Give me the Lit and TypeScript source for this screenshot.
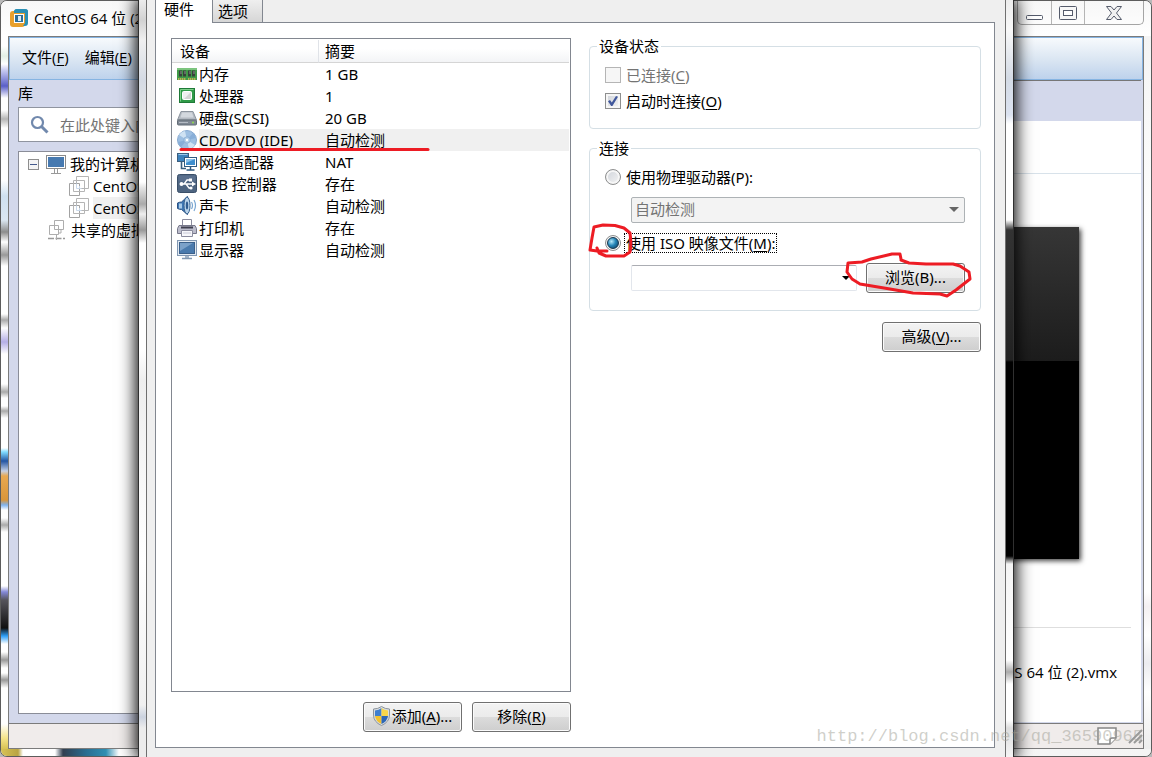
import { LitElement, html, css, svg, nothing } from "lit";
import { customElement, state } from "lit/decorators.js";
import { classMap } from "lit/directives/class-map.js";

type Device = { id: string; name: string; summary: string };

const devices: Device[] = [
  { id: "memory", name: "内存", summary: "1 GB" },
  { id: "cpu", name: "处理器", summary: "1" },
  { id: "disk", name: "硬盘(SCSI)", summary: "20 GB" },
  { id: "cd", name: "CD/DVD (IDE)", summary: "自动检测" },
  { id: "net", name: "网络适配器", summary: "NAT" },
  { id: "usb", name: "USB 控制器", summary: "存在" },
  { id: "sound", name: "声卡", summary: "自动检测" },
  { id: "printer", name: "打印机", summary: "存在" },
  { id: "display", name: "显示器", summary: "自动检测" },
];

const glyphs: Record<string, unknown> = {
  memory: svg`
    <rect x="0" y="4" width="20" height="12" fill="#3f9a47"/>
    <rect x="0" y="4" width="20" height="2" fill="#7cc47e"/>
    <path d="M2 6.500h3v6H2zM6 6.500h3v6H6zM11 6.500h3v6h-3zM15 6.500h3v6h-3z" fill="#37423b"/>
    <path d="M4 7v3M8 7v3M13 7v3M17 7v3" stroke="#8a938c"/>
    <path d="M1 15h8M11 15h8" stroke="#e6b65a" stroke-width="1.6" stroke-dasharray="1.4 .6"/>`,
  cpu: svg`
    <rect x="2.500" y="2.500" width="15" height="14" fill="#2f9a48" stroke="#1f7a38"/>
    <path d="M3.500 15.500V3.500H16.500" fill="none" stroke="#7fd08b"/>
    <rect x="5.500" y="5.500" width="9" height="8" rx="1" fill="#f0f0f0" stroke="#fff"/>
    <path d="M14 6v7H7z" fill="#d4d4d4"/>`,
  disk: svg`
    <path d="M4 3.500h12l3.500 8.500h-19z" fill="#b4bac2" stroke="#8d959f"/>
    <path d="M5 4.500h10l1.500 5h-13z" fill="#d3d8de"/>
    <rect x=".5" y="12" width="19" height="5" rx="1" fill="#7f8893" stroke="#636c77"/>
    <path d="M2 14.500h9" stroke="#b4bbc4"/>
    <circle cx="16" cy="14.500" r="1" fill="#8fe04a"/>`,
  cd: svg`
    <circle cx="10" cy="10" r="9.500" fill="#9dbfe2" stroke="#86a9d0"/>
    <path d="M10 10L2 5a9 9 0 0 1 6-4zM10 10l8 5a9 9 0 0 1-6 4z" fill="#cfe2f3"/>
    <path d="M10 10L1 12a9 9 0 0 0 3 5zM10 10l9-2a9 9 0 0 0-3-5z" fill="#88aed8"/>
    <circle cx="10" cy="10" r="3.200" fill="#b4d0ea" stroke="#7fa5cf" stroke-width=".7"/>
    <circle cx="10" cy="10" r="1.200" fill="#fff"/>`,
  net: svg`
    <rect x=".5" y="1.500" width="11" height="8" fill="#3c82bd" stroke="#3b5e7e"/>
    <path d="M1.500 2.500h9" stroke="#9cc8ea"/>
    <path d="M4.500 10v6.500H9" fill="none" stroke="#3b5e7e" stroke-width="1.600"/>
    <rect x="7.500" y="5.500" width="12" height="9" fill="#fff" stroke="#2f5a80"/>
    <rect x="9" y="7" width="9" height="6" fill="#3f8fce"/>
    <path d="M9 7h9l-9 4z" fill="#8cc2ea"/>
    <path d="M13.500 15v2.500M9.500 18h8" stroke="#2f5a80" stroke-width="1.500"/>`,
  usb: svg`
    <rect x=".5" y=".5" width="19" height="18" rx="2" fill="#4d6480" stroke="#3a4f69"/>
    <path d="M1.500 1.500h17v6h-17z" fill="#66799a" opacity=".5"/>
    <path d="M4 10h12M7 10l3-4h3M9 10l3 4h2" fill="none" stroke="#fff" stroke-width="1.300"/>
    <circle cx="4.500" cy="10" r="2" fill="#fff"/>
    <path d="M15 7.500l4 2.500-4 2.500z" fill="#fff"/>
    <rect x="12" y="4.500" width="3" height="3" fill="#fff"/>
    <circle cx="14" cy="14" r="1.600" fill="#fff"/>`,
  sound: svg`
    <path d="M.5 7q2-1 4-1L10.500.5v18L4.500 13.500q-2 0-4-1z" fill="#3f78b5" stroke="#2c5284"/>
    <path d="M2 7.500h3v5H2z" fill="#a9cbe8"/>
    <ellipse cx="10" cy="9.500" rx="3" ry="8.500" fill="#b9d3ea" stroke="#34608f"/>
    <ellipse cx="10" cy="9.500" rx="1.200" ry="4" fill="#2f5c90"/>
    <path d="M14.500 6q2 3.500 0 7M17 4q3 5.500 0 11" fill="none" stroke="#7ba7d2" stroke-width="1.200"/>`,
  printer: svg`
    <path d="M5.500 1.500h9v7h-9z" fill="#fff" stroke="#8b8c9e"/>
    <path d="M2 7.500h16l1.500 3v5H.5v-5z" fill="#bbbccb" stroke="#77788b"/>
    <path d="M4 9.500h12" stroke="#3f4050" stroke-width="2"/>
    <path d="M4.500 12.500h11v6h-11z" fill="#f7f7fb" stroke="#8b8c9e"/>
    <path d="M6 15h8" stroke="#c8c9d6"/>`,
  display: svg`
    <rect x=".5" y=".5" width="19" height="15" fill="#e1e9f2" stroke="#8298b3"/>
    <rect x="2.500" y="2.500" width="15" height="11" fill="#4a7aad" stroke="#3b608b"/>
    <path d="M3 3h13L3 11z" fill="#7ba1c9"/>
    <path d="M10 16v2" stroke="#a5b5c8" stroke-width="4"/>
    <path d="M5 18.500h10" stroke="#8298b3" stroke-width="1.500"/>`,
};

const shared = css`
  * {
    box-sizing: border-box;
  }
  button,
  input,
  select {
    font: inherit;
    color: inherit;
    margin: 0;
  }
  svg {
    display: block;
    flex: none;
  }
  u {
    text-underline-offset: 2px;
    text-decoration-thickness: 1px;
  }
`;

@customElement("vm-library-window")
export class VmLibraryWindow extends LitElement {
  static styles = [
    shared,
    css`
      :host {
        display: flex;
        flex-direction: column;
        box-sizing: border-box;
        height: 100%;
        border: 1px solid #5c5c5c;
        border-radius: 7px;
        overflow: hidden;
        font: 15px/22px "Open Sans", "Noto Sans CJK SC", sans-serif;
        background: #fcfcfc;
      }
      .titlebar {
        display: flex;
        align-items: center;
        height: 35px;
        padding: 0 7px 2px 9px;
        gap: 6px;
        background: linear-gradient(#f7f7f7, #fff);
      }
      .title {
        flex: 1;
        white-space: nowrap;
      }
      .controls {
        display: flex;
        align-self: flex-start;
        border: 1px solid #a5a5a5;
        border-top: 0;
        border-radius: 0 0 5px 5px;
      }
      .controls button {
        display: grid;
        place-items: center;
        width: 33px;
        height: 23px;
        padding: 0;
        border: 0;
        background: none;
      }
      .controls button + button {
        border-left: 1px solid #b5b5b5;
      }
      .controls .close {
        width: 59px;
      }
      .middle {
        flex: 1;
        display: grid;
        grid-template-columns: 7px minmax(0, 1fr) 7px;
        min-height: 0;
      }
      .edge-left {
        background: linear-gradient(
          #fff,
          #fff 10px,
          #e3f0e6 20px,
          #fff 28px,
          #c9ccf2 34px,
          #5a5fc8 50px,
          #fff 62px,
          #fff 74px,
          #b5b5b5 83px,
          #fff 92px,
          #fff 144px,
          #cfe0ef 160px,
          #dbe7f2 184px,
          #8c8c8c 196px,
          #fff 206px,
          #999 219px,
          #fff 230px,
          #fff 278px,
          #aaa 284px,
          #fff 292px,
          #b4aee6 306px,
          #fff 318px,
          #fff 348px,
          #aaa 356px,
          #fff 362px,
          #fff 370px,
          #aaa 375px,
          #fff 382px,
          #fff 412px,
          #7fdcff 416px,
          #2455a3 425px,
          #c4cfe4 435px,
          #e8a850 440px,
          #d9963a 464px,
          #7fb4f0 469px,
          #fff 474px,
          #fff 482px,
          #aaa 489px,
          #fff 496px,
          #fff 550px,
          #8388d8 556px,
          #55545c 564px,
          #111 592px,
          #2d9ff8 600px,
          #fff 608px,
          #fff 616px,
          #999 624px,
          #fff 632px,
          #fff 637px,
          #999 644px,
          #fff 652px,
          #fff 688px,
          #f5e48a 702px,
          #d7c254
        );
      }
      .edge-right {
        background: linear-gradient(#f4f4f4, #fff 30%, #fff 78%, #f4f0f2 80%, #fff 84%, #ececf0 88%, #fff 92%, #ededed);
      }
      .edge-bottom {
        height: 7px;
        background: linear-gradient(
          90deg,
          #d7c254,
          #b9a443 17px,
          #fff 22px,
          #fff 54px,
          #323f50 62px,
          #2b6d90 85px,
          #2f8fb2 105px,
          #fff 118px,
          #f4f4f4
        );
      }
      .client {
        display: flex;
        flex-direction: column;
        min-width: 0;
        border: 1px solid #7b7b7b;
      }
      .menubar {
        display: flex;
        align-items: center;
        height: 43px;
        padding: 0 0 4px 12px;
        gap: 16px;
        border: 1px solid #86b4e2;
        background: linear-gradient(#f7fafd, #d9e5f2 55%, #bed2ec);
      }
      .menubar button {
        padding: 0;
        border: 0;
        background: none;
      }
      .workspace {
        flex: 1;
        display: flex;
        min-height: 0;
        background: #d3d8eb;
      }
      .library {
        display: flex;
        flex-direction: column;
        width: 140px;
        padding: 2px 0 9px 9px;
      }
      .library h2 {
        margin: 0 0 3px;
        font: inherit;
      }
      .search {
        display: flex;
        align-items: center;
        height: 35px;
        padding-left: 11px;
        gap: 11px;
        margin-bottom: 9px;
        border: 1px solid #8f949f;
        border-right: 0;
        background: #fff;
      }
      .search input {
        flex: 1;
        min-width: 0;
        padding: 0;
        border: 0;
        outline: 0;
        background: none;
      }
      .search input::placeholder {
        color: #747474;
        opacity: 1;
      }
      .tree {
        flex: 1;
        margin: 0;
        padding: 1px 0 0 9px;
        list-style: none;
        border: 1px solid #8a8d98;
        border-right: 0;
        background: #fff;
      }
      .tree li {
        display: flex;
        align-items: center;
        height: 22px;
        gap: 4px;
        white-space: nowrap;
      }
      .tree .child {
        padding-left: 41px;
      }
      .tree .shared {
        padding-left: 19px;
      }
      .tree .label {
        flex: 1;
        overflow: hidden;
      }
      .tree .current {
        background: #f0f0f0;
      }
      .expander {
        width: 11px;
        height: 11px;
        padding: 0;
        margin-right: 3px;
        border: 1px solid #8e8e8e;
        background: linear-gradient(#44598c, #44598c) center / 7px 1px no-repeat #f4f4f4;
      }
      .details {
        flex: 1;
        display: flex;
        flex-direction: column;
        min-width: 0;
        margin: 0 2px 1px 0;
        border-top: 1px solid #777;
        background: linear-gradient(#d3d8eb 40px, #fff 40px);
      }
      .heading {
        height: 93px;
        border-bottom: 1px solid #d8e2ea;
      }
      .screen {
        height: 332px;
        margin: 53px 62px 0 0;
        background: linear-gradient(#363636, #1c1c1c 134px, #000 134px);
        box-shadow: 2px 2px 5px #000b;
      }
      .file {
        margin: 68px 10px 0 0;
        padding: 33px 14px 0 0;
        border-top: 1px solid #dedede;
        text-align: right;
      }
      .statusbar {
        display: flex;
        justify-content: flex-end;
        align-items: center;
        height: 25px;
        gap: 11px;
        border-top: 1px solid #7b7b7b;
        background: #f0eceb;
      }
    `,
  ];

  private vmIcon() {
    return html`<svg width="20" height="20" viewBox="0 0 20 20" fill="none" stroke="#b5b5b5">
      <path d="M7.500 .5h12v12h-12z" fill="#fff" />
      <path d="M.5 7.500h10v12H.5z" fill="#fff" stroke="#a2a2a2" />
      <path d="M4.500 4.500h11v11h-11z" />
      <path d="M7.500 7.500v5h5M10.500 10v3" stroke="#c9d8ea" />
    </svg>`;
  }

  render() {
    return html`
      <header class="titlebar">
        <svg width="18" height="18" viewBox="0 0 18 18">
          <rect x="4" y="0" width="14" height="14" rx="3" fill="#2f97bb" />
          <rect x="0" y="2" width="15" height="16" rx="3" fill="#e8a02c" />
          <path d="M4 2Q5 0 7 0h8q3 0 3 3v11q0 3-3 3h-2l2-3V4H4z" fill="#2b8fb4" />
          <rect x="4" y="5" width="10" height="9" fill="#fff" />
          <rect x="5" y="6" width="8" height="7" fill="#2e6f98" />
          <rect x="8" y="7" width="3" height="5" fill="#dceaf3" />
        </svg>
        <span class="title">CentOS 64 位 (2)</span>
        <div class="controls">
          <button aria-label="最小化">
            <svg width="18" height="18" viewBox="0 0 18 18">
              <rect x=".5" y="11.500" width="16" height="4" rx="1" fill="#fff" stroke="#555b6b" />
            </svg>
          </button>
          <button aria-label="最大化">
            <svg width="18" height="16" viewBox="0 0 18 16" fill="#f7f7f7" stroke="#555b6b">
              <rect x=".5" y="1.500" width="17" height="13" rx="1" />
              <rect x="4.500" y="5.500" width="9" height="5" fill="#fff" />
            </svg>
          </button>
          <button class="close" aria-label="关闭">
            <svg width="16" height="14" viewBox="0 0 16 14">
              <path
                d="M.5.500h4.500l3 3.500 3-3.500h4.500L10.500 7l5 6.500H11l-3-3.500-3 3.500H.5L5.500 7z"
                fill="#f1f1f1"
                stroke="#555b6b"
              />
            </svg>
          </button>
        </div>
      </header>
      <div class="middle">
        <div class="edge-left"></div>
        <div class="client">
          <nav class="menubar">
            <button>文件(<u>F</u>)</button>
            <button>编辑(<u>E</u>)</button>
          </nav>
          <div class="workspace">
            <aside class="library">
              <h2>库</h2>
              <div class="search">
                <svg width="19" height="19" viewBox="0 0 19 19" fill="none" stroke="#7189ad">
                  <circle cx="7.500" cy="7.500" r="5.500" stroke-width="2.200" />
                  <path d="M11.500 11.500l6 6" stroke-width="3" />
                </svg>
                <input type="text" aria-label="搜索" placeholder="在此处键入内容进行搜索" />
              </div>
              <ul class="tree">
                <li>
                  <button class="expander" aria-label="折叠"></button>
                  <svg width="20" height="20" viewBox="0 0 20 20">
                    <rect x=".5" y="1.500" width="19" height="13" fill="#fff" stroke="#8a8a8a" />
                    <rect x="2" y="3" width="16" height="10" fill="#4679b0" />
                    <path d="M8.500 15v4M11.500 15v4M5 19.500h10" stroke="#999" />
                  </svg>
                  <span class="label">我的计算机</span>
                </li>
                <li class="child">${this.vmIcon()}<span class="label">CentOS 64 位</span></li>
                <li class="child">${this.vmIcon()}<span class="label current">CentOS 64 位 (2)</span></li>
                <li class="shared">
                  <svg width="20" height="20" viewBox="0 0 20 20" fill="none" stroke="#adadad">
                    <path d="M7.500.500h9v9h-9z" fill="#fff" />
                    <path d="M2.500 5.500h9v9h-9z" fill="#fff" />
                    <path d="M7.500 5.500v4h4M14 9v4h-3" />
                    <path d="M1 18.500h17" stroke="#999" stroke-width="1.500" stroke-dasharray="6 1.500" />
                    <path d="M9.500 15v5" />
                  </svg>
                  <span class="label">共享的虚拟机</span>
                </li>
              </ul>
            </aside>
            <main class="details">
              <div class="heading"></div>
              <div class="screen"></div>
              <div class="file">CentOS 64 位 (2).vmx</div>
            </main>
          </div>
          <footer class="statusbar">
            <svg width="20" height="18" viewBox="0 0 20 18" fill="#fff" stroke="#858585" stroke-width="1.500">
              <path d="M1 1h18v10l-6 6H1z" />
              <path d="M13 17v-4q0-2 2-2h4" />
            </svg>
            <svg width="15" height="15" viewBox="0 0 15 15" stroke="#999" stroke-width="2">
              <path d="M1 14L14 1M6 14l8-8M11 14l3-3" />
            </svg>
          </footer>
        </div>
        <div class="edge-right"></div>
      </div>
      <div class="edge-bottom"></div>
    `;
  }
}

@customElement("vm-settings-dialog")
export class VmSettingsDialog extends LitElement {
  @state() private selected = "cd";
  @state() private source = "iso";

  static styles = [
    shared,
    css`
      :host {
        display: grid;
        grid-template-columns: 8px minmax(0, 1fr) 8px;
        border: solid #303030;
        border-width: 0 1px;
        background: #efefef;
        font: 15px/22px "Noto Sans", "Noto Sans CJK SC", sans-serif;
      }
      .glass-left {
        border-right: 1px solid #6f6f6f;
        background: linear-gradient(
          #ececec,
          #d2d2d2 20px,
          #f0f0f0 40px,
          #d5dbe4 80px,
          #e8e8e8 120px,
          #fff 150px,
          #fff 182px,
          #e2e2e2 188px,
          #aaa 204px,
          #eee 214px,
          #999 230px,
          #fff 243px,
          #fff 350px,
          #eee 380px,
          #fff 560px,
          #f0f0f0 705px,
          #cbd2df 717px,
          #ececec 728px
        );
      }
      .glass-right {
        border-left: 1px solid #6f6f6f;
        background: linear-gradient(
          #ececec,
          #f8f8f8 30px,
          #d4dbe5 78px,
          #dbe2f0 115px,
          #fff 124px,
          #fff 220px,
          #333 230px,
          #222 360px,
          #000 362px,
          #000 556px,
          #f4f4f4 564px,
          #fff 660px,
          #aaa 672px,
          #fff 684px,
          #fff 720px,
          #ddd 728px,
          #f4f4f4
        );
      }
      .body {
        display: flex;
        flex-direction: column;
        padding: 0 10px 9px 8px;
      }
      .tabs {
        display: flex;
        height: 22px;
        border-left: 1px solid #828790;
      }
      .tabs button {
        height: 22px;
        padding: 0 14px 0 5px;
        border: 0;
        border-right: 1px solid #828790;
        background: linear-gradient(#efefef, #d6d6d6);
        line-height: 20px;
      }
      .tabs .active {
        height: 23px;
        padding: 0 18px 4px 8px;
        background: #fff;
        line-height: 19px;
        z-index: 1;
      }
      .page {
        flex: 1;
        display: grid;
        grid-template-columns: minmax(0, 400fr) minmax(0, 392fr);
        gap: 18px;
        padding: 15px 13px 15px 15px;
        border: 1px solid #828790;
        background: #fff;
      }
      .hardware,
      .options {
        display: flex;
        flex-direction: column;
      }
      .list {
        flex: 1;
        border: 1px solid #828790;
        padding: 1px 1px 0 0;
      }
      table {
        width: 100%;
        border-collapse: separate;
        border-spacing: 0;
        table-layout: fixed;
      }
      th {
        height: 23px;
        padding: 0 0 0 8px;
        border-bottom: 1px solid #d5d5d5;
        background: linear-gradient(#fff 40%, #f3f4f6);
        font-weight: 400;
        line-height: 20px;
        text-align: left;
      }
      th:first-child {
        width: 147px;
        border-right: 1px solid #e0e3e8;
      }
      th + th {
        padding-left: 6px;
      }
      td {
        height: 22px;
        padding: 0 0 0 6px;
        white-space: nowrap;
      }
      td:first-child {
        padding-left: 5px;
      }
      .device {
        display: flex;
        align-items: center;
        gap: 2px;
      }
      .device span {
        flex: 1;
      }
      .selected td + td,
      .selected .device span {
        background: #f0f0f0;
      }
      .actions {
        display: flex;
        justify-content: flex-end;
        gap: 10px;
        padding-top: 10px;
      }
      .push {
        display: inline-flex;
        align-items: center;
        justify-content: center;
        gap: 2px;
        min-width: 99px;
        height: 30px;
        padding: 0 6px 2px;
        border: 1px solid #707070;
        border-radius: 3px;
        background: linear-gradient(#f3f3f3, #ebebeb 50%, #dcdcdc 50%, #cecece);
        box-shadow: inset 0 0 0 1px #fbfbfb;
        white-space: nowrap;
      }
      .options {
        gap: 11px;
      }
      fieldset {
        margin: 0;
        min-width: 0;
        padding: 8px 15px 14px;
        border: 1px solid #d5dfe5;
        border-radius: 4px;
      }
      legend {
        margin-left: -8px;
        padding: 0 2px;
        line-height: 16px;
      }
      .choice {
        display: flex;
        align-items: center;
        height: 26px;
        gap: 4px;
      }
      .choice.disabled {
        color: #747474;
      }
      .choice label {
        padding: 0 1px;
        line-height: 18px;
      }
      .choice .focused {
        outline: 1px dotted #000;
      }
      .choice input {
        appearance: none;
        display: grid;
        place-items: center;
        flex: none;
        width: 16px;
        height: 16px;
        border: 1px solid #8e8f8f;
        background: linear-gradient(135deg, #cfd3da, #f4f4f4);
        box-shadow: inset 0 0 0 2px #f6f6f6;
      }
      .choice input:disabled {
        border-color: #b5b5b5;
        background: #f6f6f6;
      }
      .choice input[type="checkbox"]:checked::before {
        content: "";
        width: 10px;
        height: 10px;
        background: #41589c;
        clip-path: polygon(0 52%, 20% 40%, 38% 65%, 80% 0, 100% 8%, 44% 100%, 32% 100%);
      }
      .choice input[type="radio"] {
        border-radius: 50%;
      }
      .choice input[type="radio"]:checked::before {
        content: "";
        width: 10px;
        height: 10px;
        border: 1px solid #17364d;
        border-radius: 50%;
        background: radial-gradient(circle at 35% 35%, #b8eafa, #2586b8 45%, #0c3455);
      }
      .connection {
        padding-bottom: 17px;
      }
      .indent {
        display: flex;
        align-items: center;
        gap: 9px;
        margin: 7px 0 7px 26px;
      }
      .indent:last-child {
        margin-bottom: 0;
      }
      .combo {
        flex: 1;
        display: grid;
        align-items: center;
        min-width: 0;
      }
      .combo > * {
        grid-area: 1 / 1;
      }
      .combo svg {
        justify-self: end;
        margin-right: 6px;
        pointer-events: none;
      }
      select {
        appearance: none;
        width: 100%;
        height: 26px;
        padding: 0 20px 2px 3px;
        border: 1px solid #e2e6ec;
        border-top-color: #abadb3;
        border-radius: 2px;
        background: #fff;
        line-height: 22px;
      }
      select:disabled {
        border-color: #adb2b5;
        background: #f3f3f3;
        color: #747474;
        opacity: 1;
      }
      .advanced {
        align-self: flex-end;
      }
    `,
  ];

  private row(d: Device) {
    return html`<tr class=${classMap({ selected: d.id === this.selected })} @click=${() => (this.selected = d.id)}>
      <td>
        <div class="device">
          <svg width="20" height="20" viewBox="0 0 20 20">${glyphs[d.id] ?? nothing}</svg><span>${d.name}</span>
        </div>
      </td>
      <td>${d.summary}</td>
    </tr>`;
  }

  render() {
    return html`
      <div class="glass-left"></div>
      <div class="body">
        <div class="tabs" role="tablist">
          <button class="active" role="tab" aria-selected="true">硬件</button>
          <button role="tab" aria-selected="false">选项</button>
        </div>
        <div class="page">
          <section class="hardware">
            <div class="list">
              <table>
                <thead>
                  <tr>
                    <th>设备</th>
                    <th>摘要</th>
                  </tr>
                </thead>
                <tbody>
                  ${devices.map((d) => this.row(d))}
                </tbody>
              </table>
            </div>
            <div class="actions">
              <button class="push">
                <svg width="17" height="20" viewBox="0 0 17 20">
                  <path d="M8.500.500Q12 3 16.500 3v6q0 7-8 10.500Q.5 16 .5 9V3Q5 3 8.500.500z" fill="#d9dde1" stroke="#8c949c" />
                  <path d="M8.500 2v8H2V4.500Q6 4 8.500 2z" fill="#3f7fd0" />
                  <path d="M8.500 2v8H15V4.500Q11 4 8.500 2z" fill="#f7d54a" />
                  <path d="M8.500 10v8Q2.500 15 2 10z" fill="#f2c230" />
                  <path d="M8.500 10v8Q14.500 15 15 10z" fill="#2c66b5" />
                </svg>
                <span>添加(<u>A</u>)...</span>
              </button>
              <button class="push"><span>移除(<u>R</u>)</span></button>
            </div>
          </section>
          <section class="options">
            <fieldset>
              <legend>设备状态</legend>
              <div class="choice disabled">
                <input type="checkbox" id="connected" disabled /><label for="connected">已连接(<u>C</u>)</label>
              </div>
              <div class="choice">
                <input type="checkbox" id="poweron" checked /><label for="poweron">启动时连接(<u>O</u>)</label>
              </div>
            </fieldset>
            <fieldset class="connection">
              <legend>连接</legend>
              <div class="choice">
                <input
                  type="radio"
                  name="source"
                  id="physical"
                  .checked=${this.source === "physical"}
                  @change=${() => (this.source = "physical")}
                /><label for="physical">使用物理驱动器(P):</label>
              </div>
              <div class="indent">
                <div class="combo">
                  <select aria-label="物理驱动器" ?disabled=${this.source !== "physical"}>
                    <option>自动检测</option>
                  </select>
                  <svg width="10" height="6" viewBox="0 0 10 6"><path d="M0 0h10L5 5z" fill="#666" /></svg>
                </div>
              </div>
              <div class="choice">
                <input
                  type="radio"
                  name="source"
                  id="iso"
                  .checked=${this.source === "iso"}
                  @change=${() => (this.source = "iso")}
                /><label for="iso" class=${classMap({ focused: this.source === "iso" })}
                  >使用 ISO 映像文件(<u>M</u>):</label
                >
              </div>
              <div class="indent">
                <div class="combo">
                  <select aria-label="ISO 映像文件">
                    <option></option>
                  </select>
                  <svg width="10" height="6" viewBox="0 0 10 6"><path d="M1 1h8L5 5z" fill="#000" /></svg>
                </div>
                <button class="push"><span>浏览(B)...</span></button>
              </div>
            </fieldset>
            <button class="push advanced"><span>高级(<u>V</u>)...</span></button>
          </section>
        </div>
      </div>
      <div class="glass-right"></div>
    `;
  }
}

@customElement("app-root")
export class AppRoot extends LitElement {
  static styles = [
    shared,
    css`
      :host {
        display: block;
        position: relative;
        height: 100vh;
        overflow: hidden;
        background: #b8b8b8;
      }
      .dialog {
        position: absolute;
        inset: 0 138px;
        box-shadow: 0 0 16px 2px #000;
      }
      .marks {
        position: absolute;
        left: 0;
        top: 0;
        pointer-events: none;
      }
      .watermark {
        position: absolute;
        right: 9px;
        bottom: 9px;
        color: #a0a09680;
        font: 17px/22px "Liberation Mono", monospace;
        pointer-events: none;
      }
    `,
  ];

  render() {
    return html`
      <vm-library-window></vm-library-window>
      <vm-settings-dialog class="dialog"></vm-settings-dialog>
      <svg
        class="marks"
        width="1000"
        height="320"
        viewBox="0 0 1000 320"
        fill="none"
        stroke="#ed1c24"
        stroke-width="3"
        stroke-linecap="round"
        stroke-linejoin="round"
      >
        <path d="M181 149.500H225L240 149.500H428" />
        <path d="M607 251H597L590 250L592 238L594 227L603 225L615 225.500L624 228L630 233L631 243L630 252L624 256H606L599 253L597 248" />
        <path
          d="M901 259L900 254H892L871 259L862 262L848 263L847 272L852 279L860 284L890 289L913 293L940 294L947 296L956 290L970 279L969 272L960 266L953 264L926 264L909 263L901 260"
        />
      </svg>
      <div class="watermark">http://blog.csdn.net/qq_36590965</div>
    `;
  }
}
